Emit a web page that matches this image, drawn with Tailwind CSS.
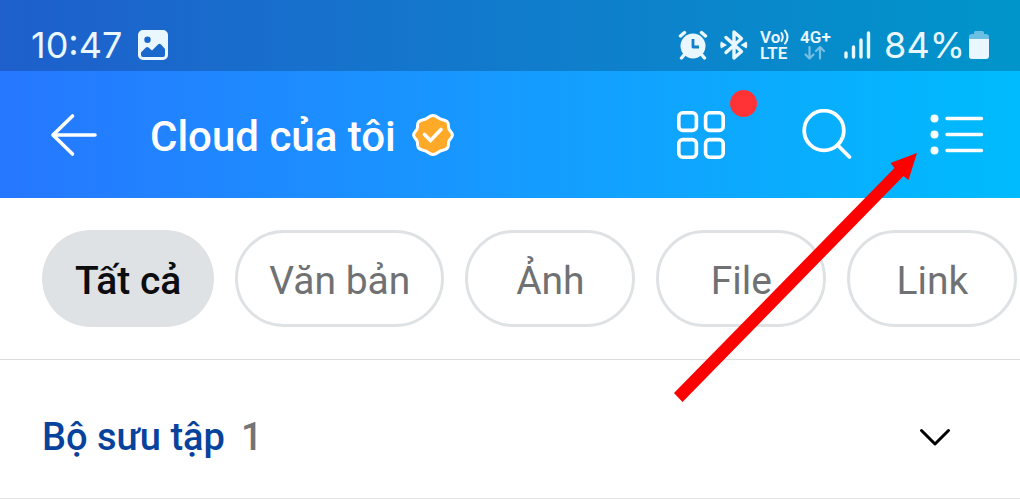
<!DOCTYPE html>
<html lang="vi">
<head>
    <meta charset="UTF-8">
    <meta name="viewport" content="width=device-width, initial-scale=1.0">
    <title>Cloud của tôi</title>
    <script src="https://cdn.jsdelivr.net/npm/@tailwindcss/browser@4"></script>
    <style>
        body {
            font-family: Roboto, sans-serif;
        }
    </style>
</head>
<body class="relative bg-white overflow-x-hidden">
    <header class="bg-linear-to-r from-[#2677ff] to-[#00bbfd] text-white">
        <!-- Status bar -->
        <div class="flex items-end justify-between h-[71px] pl-[31px] pr-[31px] pb-2 bg-black/20 text-[#eaf7ff]">
            <div class="flex items-center gap-4 h-9">
                <span class="font-[Inter] text-[36px] leading-9">10:47</span>
                <svg class="size-[30px]" viewBox="0 0 30 30" aria-hidden="true">
                    <path fill="currentColor" fill-rule="evenodd" d="M5 0h20a5 5 0 0 1 5 5v20a5 5 0 0 1-5 5H5a5 5 0 0 1-5-5V5a5 5 0 0 1 5-5zM9.500 6.500a3.200 3.200 0 1 0 0 6.400a3.200 3.200 0 1 0 0-6.400zM3 22.500V25q0 2 2 2h20q2 0 2-2v-6l-4-4.500q-1.500-1.400-3 0L14 20.500l-3.500-3q-1.300-1-2.600 0z"/>
                </svg>
            </div>
            <div class="flex items-center h-9">
                <svg class="w-[30px] h-[30px]" viewBox="0 0 30 30" fill="none" stroke="currentColor" stroke-linecap="round" aria-hidden="true">
                    <circle cx="15" cy="16" r="12.500" fill="currentColor" stroke="none"/>
                    <path stroke-width="3.400" d="M2.500 6L6.500 2.500M27.500 6L23.500 2.500M6 25l-2.500 3M24 25l2.500 3"/>
                    <path stroke="#1180c9" stroke-width="2.800" stroke-linejoin="round" stroke-linecap="butt" d="M15 9v8h6"/>
                </svg>
                <svg class="ml-3 w-[28px] h-[32px]" viewBox="0 0 28 32" fill="none" stroke="currentColor" stroke-width="3.400" stroke-linecap="round" stroke-linejoin="round" aria-hidden="true">
                    <path d="M6 8.500L21.500 22.500L14 29V3L21.500 9.500L6 23.500"/>
                    <path stroke="none" fill="currentColor" d="M1 12.500l6 3.500-6 3.500q-1.500-3.500 0-7zM26.500 12.500l-6 3.500 6 3.500q1.500-3.500 0-7z"/>
                </svg>
                <div class="ml-3 w-[32px] text-[17px] leading-4 font-semibold">
                    <div class="flex items-center">Vo<svg class="w-[10px] h-4" viewBox="0 0 10 16" fill="none" stroke="currentColor" stroke-width="2" stroke-linecap="round" aria-hidden="true"><path d="M1.500 4q2.500 4 0 8M5 1.500q5 6.500 0 13"/></svg></div>
                    <div>LTE</div>
                </div>
                <div class="ml-2 w-[32px] text-[17px] leading-4 font-semibold">
                    <div>4G+</div>
                    <svg class="ml-1 w-[22px] h-4 text-white/45" viewBox="0 0 22 16" fill="none" stroke="currentColor" stroke-width="2.200" stroke-linecap="round" stroke-linejoin="round" aria-hidden="true">
                        <path d="M5.500 2v11.500M1.500 9.500l4 4 4-4M16 13.500V2M12 6l4-4 4 4"/>
                    </svg>
                </div>
                <svg class="ml-3 w-[28px] h-[28px]" viewBox="0 0 28 28" stroke="currentColor" stroke-width="3.400" stroke-linecap="round" aria-hidden="true">
                    <path d="M2 22v4M9.500 16v10M17 9v17M24.500 2v24"/>
                </svg>
                <span class="ml-3 font-[Inter] text-[36px] leading-9">84%</span>
                <svg class="ml-1 w-[20px] h-[30px]" viewBox="0 0 20 30" fill="currentColor" aria-hidden="true">
                    <path fill-opacity=".45" d="M0 9V7q0-3 3-3h2V2.500Q5 1 6.500 1h7Q15 1 15 2.500V4h2q3 0 3 3v2z"/>
                    <path d="M0 9h20v17q0 3-3 3H3q-3 0-3-3z"/>
                </svg>
            </div>
        </div>

        <!-- Title bar -->
        <div class="flex items-center h-[127px] pl-[50px] pr-[36px]">
            <button type="button" aria-label="Quay lại">
                <svg class="w-[48px] h-[44px]" viewBox="0 0 48 44" fill="none" stroke="currentColor" stroke-width="3.600" stroke-linecap="round" stroke-linejoin="round">
                    <path d="M45 22H3M22.500 3L3 22l19.500 19"/>
                </svg>
            </button>
            <h1 class="ml-[52px] pt-1 text-[42px] leading-[48px] font-medium">Cloud của tôi</h1>
            <svg class="ml-4 size-[42px]" viewBox="0 0 42 42" aria-hidden="true">
                <path fill="#ffa928" stroke="#fff" stroke-width="3" stroke-linejoin="round" d="M21 1.600C25 1.600 26 4.500 29 5.200C32 5.900 34.500 6.200 35.800 8.500C37 10.500 36 13 37 15.200C38 17.300 40.400 18.500 40.400 21C40.400 23.500 38 24.700 37 26.800C36 29 37 31.500 35.800 33.500C34.500 35.800 32 36.100 29 36.800C26 37.500 25 40.400 21 40.400C17 40.400 16 37.500 13 36.800C10 36.100 7.500 35.800 6.200 33.500C5 31.500 6 29 5 26.800C4 24.700 1.600 23.500 1.600 21C1.600 18.500 4 17.300 5 15.200C6 13 5 10.500 6.200 8.500C7.500 6.200 10 5.900 13 5.200C16 4.500 17 1.600 21 1.600Z"/>
                <path fill="none" stroke="#fff" stroke-width="3.600" stroke-linecap="round" d="M12.500 20.500l6 6L29 15.500"/>
            </svg>
            <div class="ml-auto flex items-center gap-[76px]">
                <button type="button" class="relative" aria-label="Tiện ích">
                    <svg class="size-[50px]" viewBox="0 0 50 50" fill="none" stroke="currentColor" stroke-width="3.600">
                        <rect x="2.800" y="2.800" width="17.600" height="17.600" rx="4"/>
                        <rect x="29.600" y="2.800" width="17.600" height="17.600" rx="4"/>
                        <rect x="2.800" y="29.600" width="17.600" height="17.600" rx="4"/>
                        <rect x="29.600" y="29.600" width="17.600" height="17.600" rx="4"/>
                    </svg>
                    <span class="absolute -top-5 -right-[31px] size-[27px] rounded-full bg-[#ff3336]"></span>
                </button>
                <button type="button" aria-label="Tìm kiếm">
                    <svg class="size-[52px]" viewBox="0 0 52 52" fill="none" stroke="currentColor" stroke-width="3.800" stroke-linecap="round">
                        <circle cx="22" cy="21.500" r="19.800"/>
                        <path d="M35.500 36L47.500 48"/>
                    </svg>
                </button>
                <button type="button" aria-label="Tùy chọn">
                    <svg class="w-[54px] h-[44px]" viewBox="0 0 54 44" fill="none" stroke="currentColor" stroke-width="3.400" stroke-linecap="round">
                        <path d="M17 5.500H51.500M17 21.500H51.500M17 37.500H51.500"/>
                        <g fill="currentColor" stroke="none"><circle cx="4.500" cy="5.500" r="4"/><circle cx="4.500" cy="21.500" r="4"/><circle cx="4.500" cy="37.500" r="4"/></g>
                    </svg>
                </button>
            </div>
        </div>
    </header>

    <!-- Filters -->
    <nav class="flex gap-[21px] pt-8 pb-8 pl-[42px] border-b border-[#dcdddf] overflow-hidden text-[39px] leading-[48px] text-[#707173]">
        <button type="button" class="shrink-0 h-[97px] min-w-[170px] px-[33px] pt-1 rounded-full bg-[#dfe2e5] font-medium text-[#0c0d0e]">Tất cả</button>
        <button type="button" class="shrink-0 h-[97px] min-w-[170px] px-[31px] pt-1 rounded-full border-3 border-[#dfe2e4]">Văn bản</button>
        <button type="button" class="shrink-0 h-[97px] min-w-[170px] px-[31px] pt-1 rounded-full border-3 border-[#dfe2e4]">Ảnh</button>
        <button type="button" class="shrink-0 h-[97px] min-w-[170px] px-[31px] pt-1 rounded-full border-3 border-[#dfe2e4]">File</button>
        <button type="button" class="shrink-0 h-[97px] min-w-[170px] px-[31px] pt-1 rounded-full border-3 border-[#dfe2e4]">Link</button>
    </nav>

    <!-- Collections -->
    <section class="border-b border-[#e4e4e6]">
        <button type="button" class="flex items-center w-full pt-[53px] pb-[37px] pl-[42px] pr-[68px] text-[38px] leading-[48px] font-medium">
            <span class="text-[#07429c]">Bộ sưu tập</span>
            <span class="ml-4 text-[#737475]">1</span>
            <svg class="ml-auto w-[34px] h-[20px]" viewBox="0 0 34 20" fill="none" stroke="#000" stroke-width="3" stroke-linecap="round" stroke-linejoin="round" aria-hidden="true">
                <path d="M3.500 3.500L17 17L30.500 3.500"/>
            </svg>
        </button>
    </section>

    <!-- Pointer to the options menu -->
    <svg class="absolute top-[152px] right-[102px] w-[244px] h-[250px] pointer-events-none" viewBox="0 0 244 250" fill="#fd0000" aria-hidden="true">
        <path d="M243 1L234.500 28L229.500 24L8.500 250L0 241L220.500 16L216.500 11Z"/>
    </svg>
</body>
</html>
